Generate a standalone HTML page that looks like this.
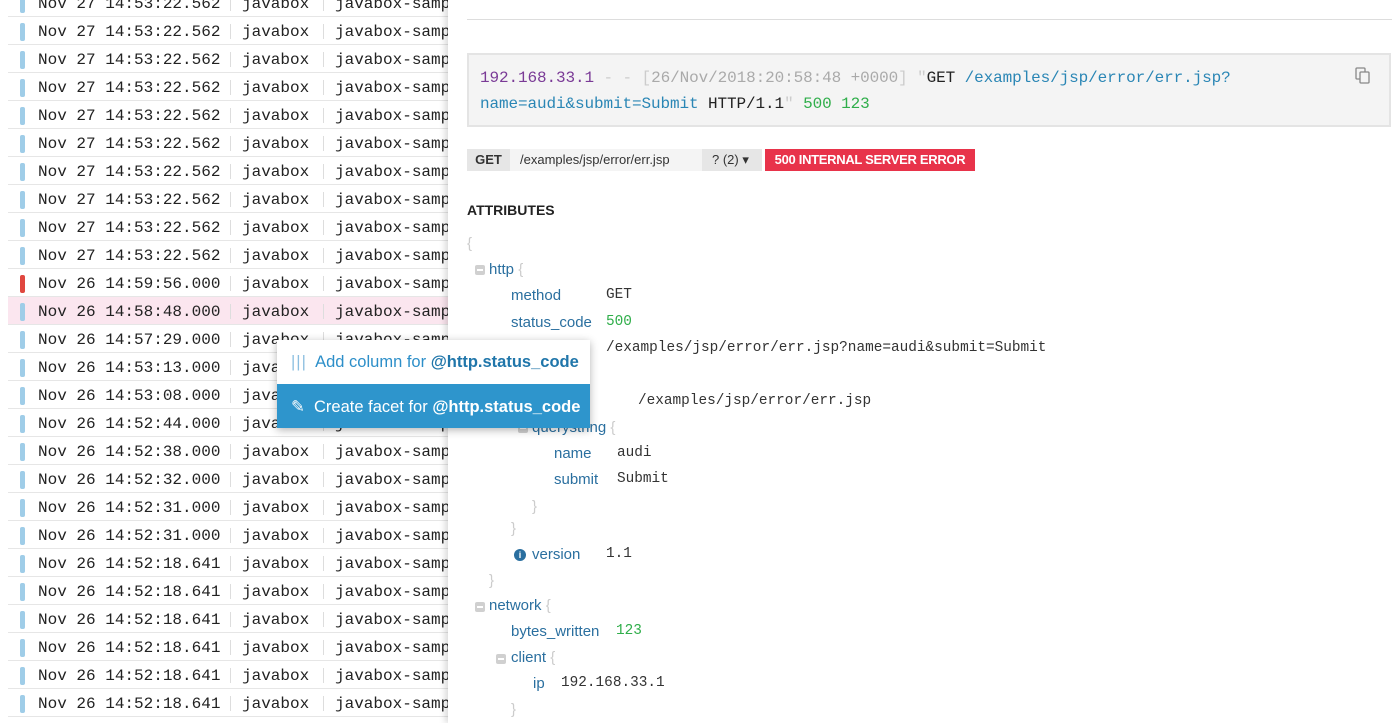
<!DOCTYPE html>
<html><head><meta charset="utf-8"><style>
*{margin:0;padding:0;box-sizing:border-box}
body{width:1400px;height:723px;overflow:hidden;background:#fff;position:relative;font-family:"Liberation Sans",sans-serif}
.left{position:absolute;left:0;top:0;width:448px;height:723px;overflow:hidden;background:#fff}
.row{position:absolute;left:8px;width:450px;height:28px;border-bottom:1px solid #e6e6e6;font-family:"Liberation Mono",monospace;font-size:16px;color:#222}
.row span{position:absolute;top:6px;white-space:nowrap}
.bar{position:absolute;left:12px;top:6px;width:5px;height:18px;border-radius:2px;background:#9fcde8}
.sep{position:absolute;top:7px;width:1px;height:15px;background:#ddd}
.right{position:absolute;left:448px;top:0;width:952px;height:723px;background:#fff;box-shadow:-3px 0 6px rgba(0,0,0,.15)}
.mono{font-family:"Liberation Mono",monospace}
.k{color:#2a6f9f;position:absolute;font-size:15px;white-space:nowrap}
.v{color:#333;position:absolute;font-family:"Liberation Mono",monospace;font-size:14.4px;white-space:nowrap}
.b{color:#ccc;position:absolute;font-size:15px}
.mn{position:absolute;width:10px;height:10px;background:#d0d0d0;border-radius:2px}
.mn:after{content:"";position:absolute;left:2px;top:4px;width:6px;height:2px;background:#fff}
</style></head><body>
<div class="left">
<div class="row" style="top:-11px"><div class="bar"></div><span style="left:30px">Nov 27 14:53:22.562</span><div class="sep" style="left:222px"></div><span style="left:234px">javabox</span><div class="sep" style="left:315px"></div><span style="left:327px">javabox-samp</span></div>
<div id="rows"></div>
</div>
<script>
var d=["Nov 27 14:53:22.562","Nov 27 14:53:22.562","Nov 27 14:53:22.562","Nov 27 14:53:22.562","Nov 27 14:53:22.562","Nov 27 14:53:22.562","Nov 27 14:53:22.562","Nov 27 14:53:22.562","Nov 27 14:53:22.562","Nov 26 14:59:56.000","Nov 26 14:58:48.000","Nov 26 14:57:29.000","Nov 26 14:53:13.000","Nov 26 14:53:08.000","Nov 26 14:52:44.000","Nov 26 14:52:38.000","Nov 26 14:52:32.000","Nov 26 14:52:31.000","Nov 26 14:52:31.000","Nov 26 14:52:18.641","Nov 26 14:52:18.641","Nov 26 14:52:18.641","Nov 26 14:52:18.641","Nov 26 14:52:18.641","Nov 26 14:52:18.641"];
var h="";for(var i=0;i<d.length;i++){var t=17+i*28;var bg=i==10?"background:#fbe6ef;":"";var bc=i==9?"background:#e0473f":"";
h+='<div class="row" style="top:'+t+'px;'+bg+'"><div class="bar" style="'+bc+'"></div><span style="left:30px">'+d[i]+'</span><div class="sep" style="left:222px"></div><span style="left:234px">javabox</span><div class="sep" style="left:315px"></div><span style="left:327px">javabox-samp</span></div>';}
document.getElementById("rows").innerHTML=h;
</script>
<div class="right">
<div style="position:absolute;left:19px;top:19px;width:925px;height:1px;background:#ddd"></div>
<div style="position:absolute;left:19px;top:53px;width:924px;height:74px;background:#f4f4f4;border:2px solid #e4e4e4"></div>
<div class="mono" style="position:absolute;left:32px;top:65px;font-size:16px;line-height:26px;width:820px;color:#222;letter-spacing:-0.1px">
<span style="color:#7a3a96">192.168.33.1</span> <span style="color:#ccc">- - [</span><span style="color:#aaa">26/Nov/2018:20:58:48 +0000</span><span style="color:#ccc">] "</span>GET <span style="color:#2a86b5">/examples/jsp/error/err.jsp?<br>name=audi&amp;submit=Submit</span> HTTP/1.1<span style="color:#ccc">"</span> <span style="color:#2fae4a">500 123</span></div>
<svg style="position:absolute;left:906px;top:66px" width="18" height="18" viewBox="0 0 18 18" fill="none" stroke="#888" stroke-width="1.3"><rect x="2" y="2" width="9" height="11" rx="1"/><rect x="6" y="6" width="9" height="11" rx="1" fill="#f4f4f4"/></svg>
<div style="position:absolute;left:19px;top:149px;height:22px;font-size:13px;line-height:22px;display:flex">
<div style="background:#e6e6e6;width:43px;text-align:center;font-weight:bold;color:#333">GET</div>
<div style="background:#f4f4f4;width:192px;padding-left:10px;color:#333">/examples/jsp/error/err.jsp</div>
<div style="background:#e6e6e6;width:60px;padding-left:10px;color:#333">? (2) ▾</div>
<div style="background:#e8334a;width:210px;margin-left:3px;text-align:center;color:#fff;font-weight:bold;letter-spacing:-0.3px">500 INTERNAL SERVER ERROR</div></div>
<div style="position:absolute;left:19px;top:202px;font-size:14px;font-weight:bold;color:#222">ATTRIBUTES</div>
<div class="b" style="left:19px;top:235px">{</div>
<div class="mn" style="left:27px;top:265px"></div><div class="k" style="left:41px;top:261px">http <span style="color:#ccc">{</span></div>
<div class="k" style="left:63px;top:287px">method</div><div class="v" style="left:158px;top:287px">GET</div>
<div class="k" style="left:63px;top:314px">status_code</div><div class="v" style="left:158px;top:314px;color:#2fae4a">500</div>
<div class="v" style="left:158px;top:340px">/examples/jsp/error/err.jsp?name=audi&amp;submit=Submit</div>
<div class="v" style="left:190px;top:393px">/examples/jsp/error/err.jsp</div>
<div class="mn" style="left:70px;top:423px"></div><div class="k" style="left:84px;top:419px">querystring <span style="color:#ccc">{</span></div>
<div class="k" style="left:106px;top:445px">name</div><div class="v" style="left:169px;top:445px">audi</div>
<div class="k" style="left:106px;top:471px">submit</div><div class="v" style="left:169px;top:471px">Submit</div>
<div class="b" style="left:84px;top:498px">}</div>
<div class="b" style="left:63px;top:520px">}</div>
<div style="position:absolute;left:66px;top:549px;width:12px;height:12px;border-radius:50%;background:#2a6f9f;color:#fff;font-size:9px;font-weight:bold;text-align:center;line-height:12px">i</div>
<div class="k" style="left:84px;top:546px">version</div><div class="v" style="left:158px;top:546px">1.1</div>
<div class="b" style="left:41px;top:572px">}</div>
<div class="mn" style="left:27px;top:602px"></div><div class="k" style="left:41px;top:597px">network <span style="color:#ccc">{</span></div>
<div class="k" style="left:63px;top:623px">bytes_written</div><div class="v" style="left:168px;top:623px;color:#2fae4a">123</div>
<div class="mn" style="left:48px;top:654px"></div><div class="k" style="left:63px;top:649px">client <span style="color:#ccc">{</span></div>
<div class="k" style="left:85px;top:675px">ip</div><div class="v" style="left:113px;top:675px">192.168.33.1</div>
<div class="b" style="left:63px;top:701px">}</div>
</div>
<div style="position:absolute;left:277px;top:340px;width:313px;height:88px;background:#fff;box-shadow:0 2px 8px rgba(0,0,0,.3);font-size:16.5px">
<div style="height:44px;line-height:44px;padding-left:14px;color:#2d8fc9"><span style="color:#8bbfe0;letter-spacing:1px">|||</span>&nbsp; Add column for <b style="color:#2076aa">@http.status_code</b></div>
<div style="height:44px;line-height:46px;padding-left:14px;background:#2e95cc;color:#fff"><span>✎</span>&nbsp; Create facet for <b>@http.status_code</b></div>
</div>
</body></html>
